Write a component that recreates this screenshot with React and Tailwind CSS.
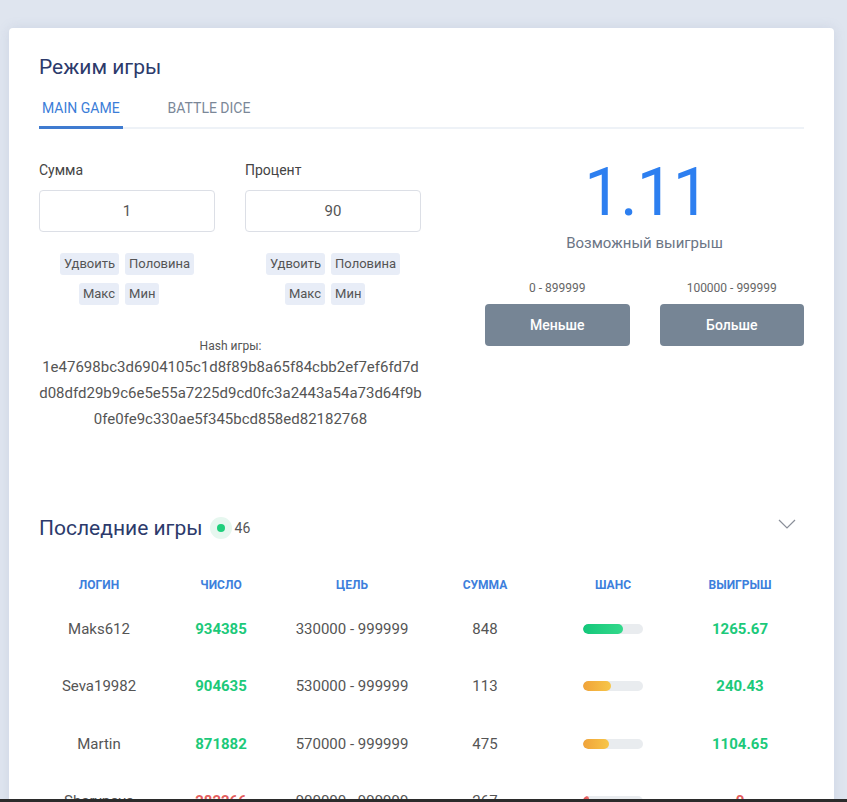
const hashLines = [
  "1e47698bc3d6904105c1d8f89b8a65f84cbb2ef7ef6fd7d",
  "d08dfd29b9c6e5e55a7225d9cd0fc3a2443a54a73d64f9b",
  "0fe0fe9c330ae5f345bcd858ed82182768",
];

const games = [
  { login: "Maks612", number: "934385", target: "330000 - 999999", sum: "848", chance: 67, win: "1265.67", ok: true },
  { login: "Seva19982", number: "904635", target: "530000 - 999999", sum: "113", chance: 47, win: "240.43", ok: true },
  { login: "Martin", number: "871882", target: "570000 - 999999", sum: "475", chance: 43, win: "1104.65", ok: true },
  { login: "Sharypova", number: "282266", target: "900000 - 999999", sum: "267", chance: 10, win: "0", ok: false },
];

export default function App() {
  return (
    <div className="h-[802px] flex flex-col overflow-hidden bg-[#dfe5ef] font-['Roboto',sans-serif]">
      <div className="flex-1 overflow-hidden pl-[9px] pr-[13px] pt-[28px]">
        <div className="bg-white rounded-t-[4px] shadow-[0_0_12px_rgba(120,140,180,0.18)] px-[30px] pt-[25px] pb-10">
          {/* режим игры */}
          <h1 className="text-[21px] leading-[28px] text-[#2c3a6b]">Режим игры</h1>

          <div className="mt-[17px] flex gap-[42px] border-b-2 border-[#eef2f7]">
            <div className="px-[3px] pb-[8px] -mb-[2px] border-b-[3px] border-[#3f7bd0] text-[14px] leading-[20px] text-[#3b7dd8] uppercase">
              Main Game
            </div>
            <div className="px-[3px] pb-[8px] text-[14px] leading-[20px] text-[#7b8798] uppercase">
              Battle Dice
            </div>
          </div>

          <div className="mt-[31px] flex gap-[63px]">
            <div className="w-[383px]">
              <div className="flex gap-[30px]">
                <BetField label="Сумма" value="1" />
                <BetField label="Процент" value="90" />
              </div>

              <div className="mt-[33px] text-center">
                <div className="text-[12px] leading-[16px] text-[#555]">Hash игры:</div>
                <div className="text-[15px] leading-[26px] text-[#555]">
                  {hashLines.map((l) => (
                    <div key={l}>{l}</div>
                  ))}
                </div>
              </div>
            </div>

            <div className="flex-1 flex flex-col items-center">
              <div className="text-[66px] leading-[66px] tracking-[-1px] text-[#2d7ff0] pl-1">1.11</div>
              <div className="mt-[7px] text-[15px] leading-[20px] text-[#6b7585]">Возможный выигрыш</div>
              <div className="mt-[27px] w-full flex gap-[30px]">
                <RollButton range="0 - 899999" text="Меньше" />
                <RollButton range="100000 - 999999" text="Больше" />
              </div>
            </div>
          </div>

          {/* последние игры */}
          <div className="mt-[82px] flex items-center justify-between">
            <div className="flex items-center">
              <h2 className="text-[21px] leading-[28px] text-[#2c3a6b]">Последние игры</h2>
              <span className="ml-[7px] w-[22px] h-[22px] rounded-full bg-[#e6f7ef] flex items-center justify-center">
                <span className="w-[8px] h-[8px] rounded-full bg-[#1fcf7c]" />
              </span>
              <span className="ml-[3px] text-[14px] text-[#555]">46</span>
            </div>
            <svg width="18" height="10" viewBox="0 0 18 10" className="mr-[8px] -mt-[8px]" fill="none">
              <path d="M1 1l8 8 8-8" stroke="#8a8f99" strokeWidth="1.2" />
            </svg>
          </div>

          <div className="mt-[35px] grid grid-cols-[120px_124px_138px_128px_128px_126px] text-center">
            {["Логин", "Число", "Цель", "Сумма", "Шанс", "Выигрыш"].map((h) => (
              <div key={h} className="text-[12px] leading-[16px] font-bold uppercase text-[#3d7fdc]">
                {h}
              </div>
            ))}
          </div>

          <div className="mt-[7px]">
            {games.map((g) => (
              <GameRow key={g.login} g={g} />
            ))}
          </div>
        </div>
      </div>
      <div className="h-[3px] bg-[#2b2b2b]" />
    </div>
  );
}

function BetField({ label, value }) {
  return (
    <div className="w-[176px]">
      <div className="text-[14px] leading-[20px] text-[#444]">{label}</div>
      <div className="mt-[10px] h-[42px] border border-[#dcdfe6] rounded-[4px] flex items-center justify-center text-[15px] text-[#555]">
        {value}
      </div>
      <div className="mt-[21px] flex justify-center gap-[6px]">
        <div className="flex flex-col items-end gap-[8px]">
          <Chip>Удвоить</Chip>
          <Chip>Макс</Chip>
        </div>
        <div className="flex flex-col items-start gap-[8px]">
          <Chip>Половина</Chip>
          <Chip>Мин</Chip>
        </div>
      </div>
    </div>
  );
}

function Chip({ children }) {
  return (
    <span className="h-[22px] px-[4px] rounded-[3px] bg-[#e8edf7] text-[13px] leading-[22px] text-[#555]">
      {children}
    </span>
  );
}

function RollButton({ range, text }) {
  return (
    <div className="flex-1 flex flex-col items-center">
      <div className="text-[12px] leading-[16px] text-[#666]">{range}</div>
      <button className="mt-[8px] w-full h-[42px] rounded-[4px] bg-[#768595] text-white text-[14px] font-medium">
        {text}
      </button>
    </div>
  );
}

function GameRow({ g }) {
  const color = g.ok ? "text-[#1cc97a]" : "text-[#e35d5d]";
  const bar =
    g.chance > 60
      ? "bg-gradient-to-r from-[#12c77a] to-[#32d98b]"
      : g.chance > 20
        ? "bg-gradient-to-r from-[#f0a33a] to-[#f7c648]"
        : "bg-gradient-to-r from-[#e0504f] to-[#ee6a6a]";
  return (
    <div className="h-[57.5px] grid grid-cols-[120px_124px_138px_128px_128px_126px] items-center text-center text-[15px] text-[#555]">
      <div>{g.login}</div>
      <div className={`font-bold ${color}`}>{g.number}</div>
      <div>{g.target}</div>
      <div>{g.sum}</div>
      <div className="flex justify-center">
        <div className="w-[60px] h-[10px] rounded-full bg-[#e9ecef] overflow-hidden">
          <div className={`h-full rounded-full ${bar}`} style={{ width: `${g.chance}%` }} />
        </div>
      </div>
      <div className={`font-bold ${color}`}>{g.win}</div>
    </div>
  );
}
